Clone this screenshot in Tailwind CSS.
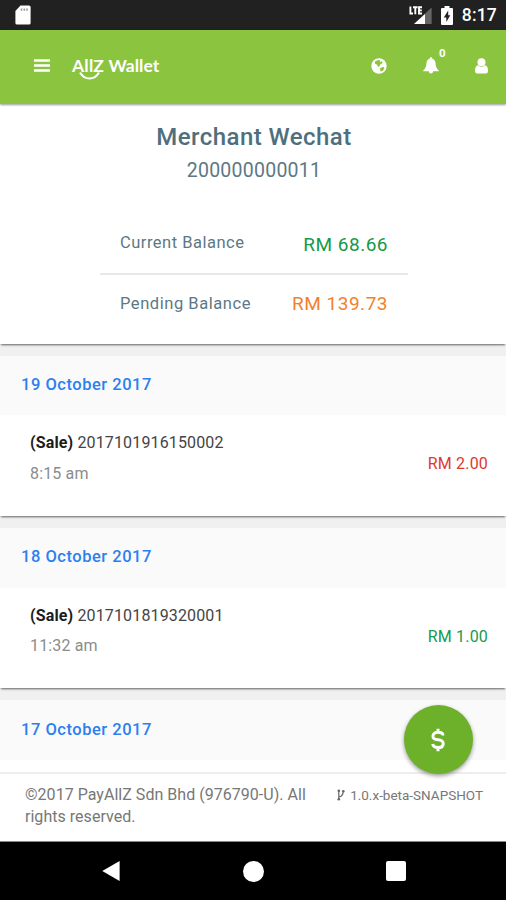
<!DOCTYPE html>
<html lang="en">
<head>
<meta charset="utf-8">
<title>AllZ Wallet</title>
<script src="https://cdn.jsdelivr.net/npm/@tailwindcss/browser@4"></script>
</head>
<body class="bg-[#f0f0f0]">
<div class="relative flex h-[900px] w-[506px] flex-col overflow-hidden bg-[#f0f0f0] font-['Roboto',sans-serif]">
  <!-- Status bar -->
  <div class="flex h-[30px] shrink-0 items-center bg-[#212121] pl-[15px] pr-[9px]">
    <svg class="h-[20px] w-[16px]" viewBox="0 0 16 20"><path d="M5.5 0.5H14a1.6 1.6 0 0 1 1.6 1.6V17.9a1.6 1.6 0 0 1-1.6 1.6H2a1.6 1.6 0 0 1-1.6-1.6V6z" fill="#fff"/><path d="M6.500 3.500v2.200M9.300 3.500v2.200M12 3.500v2.200" stroke="#999" stroke-width="1.6"/></svg>
    <div class="ml-auto flex items-center">
      <svg class="h-[20px] w-[24px]" viewBox="0 0 24 20"><path d="M22.6 2.6V19H5z" fill="#666"/><path d="M16 9V19H5z" fill="#fff"/><path d="M1.2 1.5v7h3M4 2.5h4.6M6.3 2.5v7M13 2.5H10v6h3M10 5.5h2.8" fill="none" stroke="#212121" stroke-width="3.6"/><path d="M1.4 1.500v7h2.600M4 2.300h4.600M6.300 2.300v7M13 2.300H10v6.200h3M10 5.400h2.800" fill="none" stroke="#fff" stroke-width="1.900"/></svg>
      <svg class="ml-[8px] h-[19px] w-[12px]" viewBox="0 0 12 19"><path d="M3.5 0h5v2H11a1 1 0 0 1 1 1V18a1 1 0 0 1-1 1H1a1 1 0 0 1-1-1V3a1 1 0 0 1 1-1H3.500z" fill="#fff"/><path d="M7.200 4.500L2.800 11.500H5.300V16L9.300 9.200H7.200z" fill="#212121"/></svg>
      <span class="ml-[9px] text-[17.500px] leading-[30px] font-medium tracking-[0.200px] text-white">8:17</span>
    </div>
  </div>

  <!-- App header -->
  <header class="relative z-10 flex h-[74px] shrink-0 items-center bg-[#8bc540] pl-[34px] shadow-[0_1px_2px_rgba(0,0,0,0.4)]">
    <svg class="mt-[-3px] h-[13px] w-[16px]" viewBox="0 0 16 13"><path d="M0 1.500h16M0 6.500h16M0 11.500h16" stroke="#fff" stroke-width="2.600" stroke-linecap="butt"/></svg>
    <div class="relative mt-[-2px] ml-[22px] flex h-[30px] items-center text-[17.500px] font-bold text-white font-['Lato',sans-serif]">
      <span class="w-[36.500px] tracking-[0.200px]">AllZ</span><span class="tracking-[0px]">Wallet</span>
      <svg class="absolute top-[20px] left-[7px] h-[9px] w-[22px]" viewBox="0 0 22 9"><path d="M1 1.500Q4.500 7.500 10.500 7.500T20 1.500" fill="none" stroke="#fff" stroke-width="2"/></svg>
    </div>
    <div class="mt-[-3px] ml-auto flex items-center pr-[18px]">
      <svg class="h-[16px] w-[16px]" viewBox="0 0 16 16"><circle cx="8" cy="8" r="7.700" fill="#fff"/><path d="M4.200 3.200L8 1.800 9.300 3.100 8.600 4.300 11 3.300 11.600 5 9.200 6.600 8 9 6.500 8.200 6.300 6.800 4 5.800zM9 10.200L12.200 8.700 13.500 10.300 11.700 13 9.500 13.500z" fill="#8bc540"/></svg>
      <div class="relative ml-[36px]">
        <svg class="h-[17px] w-[16px]" viewBox="0 0 16 17"><path d="M8 0q1.200 0 1.200 1.500Q12.200 2.500 12.500 6c.2 4 1.300 5.700 3.300 7.500v.8H.2v-.8C2.200 11.700 3.300 10 3.500 6 3.800 2.500 6.800 1.500 6.800 1.500Q6.800 0 8 0zM5.800 14.300h4.400Q10 16.600 8 16.600T5.800 14.300z" fill="#fff"/></svg>
        <span class="absolute top-[-11px] left-[16px] text-[11.500px] leading-[14px] font-bold text-white">0</span>
      </div>
      <svg class="ml-[36px] h-[16px] w-[13px]" viewBox="0 0 13 16"><circle cx="6.500" cy="4.300" r="4" fill="#fff"/><path d="M3 7.300Q6.500 10.300 10 7.300 13 8 13 12.800 13 15.500 10.800 15.500H2.200Q0 15.500 0 12.800 0 8 3 7.300z" fill="#fff"/></svg>
    </div>
  </header>

  <!-- Balance summary -->
  <section class="flex h-[240px] shrink-0 flex-col items-center bg-white pt-[17px] pl-[2px] text-[#5c7884] shadow-[0_2px_2px_-1px_rgba(0,0,0,0.6)]">
    <h1 class="text-[24px] leading-[32px] font-medium tracking-[0.450px] text-[#4f6f7c]">Merchant Wechat</h1>
    <p class="mt-[4px] text-[19.500px] leading-[28px] tracking-[0.250px]">200000000011</p>
    <div class="mt-[29px] w-[308px]">
      <div class="flex h-[61px] items-center justify-between border-b-2 border-[#e8e8e8] px-[20px]">
        <span class="text-[16.500px] tracking-[0.500px]">Current Balance</span><span class="mt-[3px] text-[19px] tracking-[0.500px] text-[#149a49]">RM 68.66</span>
      </div>
      <div class="flex h-[58px] items-center justify-between px-[20px]">
        <span class="text-[16.500px] tracking-[0.550px]">Pending Balance</span><span class="text-[19px] tracking-[0.500px] text-[#f47f2c]">RM 139.73</span>
      </div>
    </div>
  </section>

  <!-- Transactions -->
  <section class="mt-[12px] h-[160px] shrink-0 bg-white shadow-[0_2px_2px_-1px_rgba(0,0,0,0.6)]">
    <h2 class="h-[59px] bg-[#fafafa] pl-[21px] text-[16.500px] leading-[57px] font-medium tracking-[0.520px] text-[#2b7ff0]">19 October 2017</h2>
    <div class="flex justify-between pt-[12px] pr-[18px] pl-[30px]">
      <div class="text-[16px]">
        <p class="leading-[31px] tracking-[0.140px] text-[#444]"><b class="font-bold text-[#1c1c1c]">(Sale)</b> 2017101916150002</p>
        <p class="leading-[31px] tracking-[0.150px] text-[#8c8c8c]">8:15 am</p>
      </div>
      <span class="mt-[21px] text-[16px] leading-[31px] tracking-[0.180px] text-[#dc3a30]">RM 2.00</span>
    </div>
  </section>
  <section class="mt-[12px] h-[160px] shrink-0 bg-white shadow-[0_2px_2px_-1px_rgba(0,0,0,0.6)]">
    <h2 class="h-[60px] bg-[#fafafa] pl-[21px] text-[16.500px] leading-[57px] font-medium tracking-[0.520px] text-[#2b7ff0]">18 October 2017</h2>
    <div class="flex justify-between pt-[12px] pr-[18px] pl-[30px]">
      <div class="text-[16px]">
        <p class="leading-[31px] tracking-[0.140px] text-[#444]"><b class="font-bold text-[#1c1c1c]">(Sale)</b> 2017101819320001</p>
        <p class="leading-[30px] tracking-[0.150px] text-[#8c8c8c]">11:32 am</p>
      </div>
      <span class="mt-[21px] text-[16px] leading-[31px] tracking-[0.180px] text-[#189a50]">RM 1.00</span>
    </div>
  </section>
  <section class="mt-[12px] h-[72px] shrink-0 bg-white">
    <h2 class="h-[60px] bg-[#fafafa] pl-[21px] text-[16.500px] leading-[59px] font-medium tracking-[0.520px] text-[#2b7ff0]">17 October 2017</h2>
  </section>

  <!-- Footer -->
  <footer class="flex h-[70px] shrink-0 justify-between border-t-2 border-b border-t-[#eee] border-b-[#888] bg-white pt-[10px] pr-[23px] pl-[25px] text-[#777]">
    <p class="w-[290px] text-[16px] leading-[22px] tracking-[0.030px]">©2017 PayAllZ Sdn Bhd (976790-U). All rights reserved.</p>
    <p class="flex h-[22px] items-center text-[13.500px] whitespace-nowrap">
      <svg class="mr-[5px] h-[12px] w-[8px]" viewBox="0 0 8 12"><path d="M1.800 1v10M1.800 8Q6 7.500 6.300 2" fill="none" stroke="#666" stroke-width="1.200"/><circle cx="1.800" cy="1.800" r="1.300" fill="#666"/><circle cx="6.300" cy="2.300" r="1.300" fill="#666"/><circle cx="1.800" cy="10.200" r="1.300" fill="#666"/></svg>1.0.x-beta-SNAPSHOT</p>
  </footer>

  <!-- Navigation bar -->
  <nav class="flex h-[58px] shrink-0 items-center bg-black pl-[102px]">
    <svg class="h-[22px] w-[18px]" viewBox="0 0 18 22"><path d="M17.600 1V21L0.300 11z" fill="#fff"/></svg>
    <span class="ml-[123px] h-[21px] w-[21px] rounded-full bg-white"></span>
    <span class="ml-[122px] h-[20px] w-[20px] rounded-[2px] bg-white"></span>
  </nav>

  <!-- Floating action button -->
  <button class="absolute top-[705px] left-[404px] z-20 flex h-[69px] w-[69px] items-center justify-center rounded-full bg-[#6db02a] shadow-[0_2px_4px_rgba(0,0,0,0.4)]" aria-label="Pay">
    <svg class="mr-[1px] h-[24px] w-[14px]" viewBox="0 0 14 24"><path d="M12 7.500Q12 4.200 7.300 4.200T2 7.800 7 11.800 12.200 16 7 19.600 1.700 16M7 0.800V4.500M7 19.500V23.200" fill="none" stroke="#fff" stroke-width="3"/></svg>
  </button>
</div>
</body>
</html>
